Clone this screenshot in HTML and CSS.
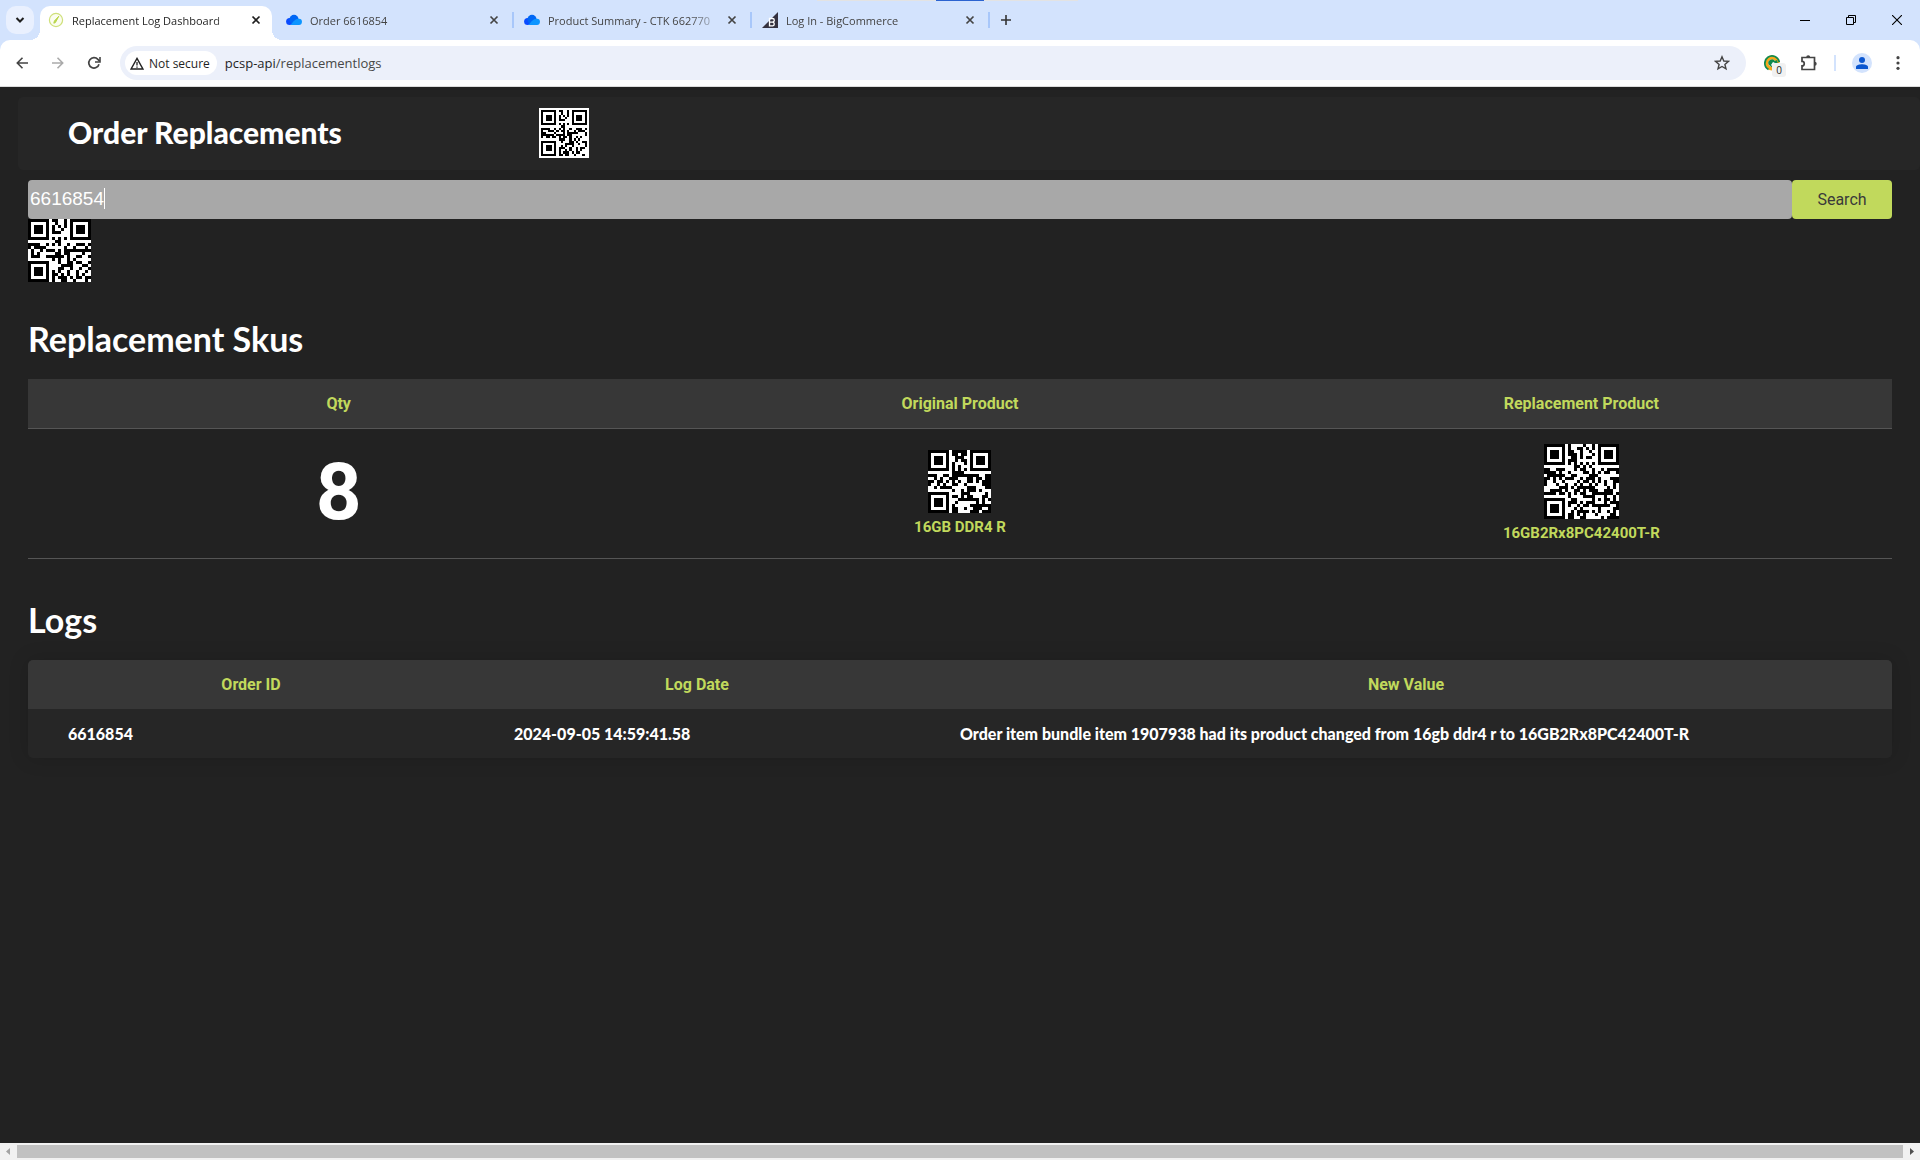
FILE: index.html
```html
<!DOCTYPE html>
<html lang="en">
<head>
<meta charset="utf-8">
<title>Replacement Log Dashboard</title>
<link rel="stylesheet" href="styles.css">
</head>
<body>
<header class="browser">
  <div class="tabstrip">
    <span class="edge"><span class="edge-mark"></span></span>
    <button class="tab-search" aria-label="Search tabs"><svg width="12" height="12" viewBox="0 0 12 12"><path d="M2.5 4l3.5 3.5L9.5 4" fill="none" stroke="#1f1f1f" stroke-width="2"/></svg></button>
    <div class="tab active">
      <svg class="favicon" width="16" height="16" viewBox="0 0 16 16"><circle cx="8" cy="8" r="6.6" fill="#fbfdf0" stroke="#cfe07a" stroke-width="1.2"/><path d="M10.8 4.2L6.4 9l-.6 2.2 1.6-.6z" fill="#b9d64a" stroke="#b9d64a"/></svg>
      <span class="tab-title">Replacement Log Dashboard</span>
      <button class="close" aria-label="Close tab"><svg width="10" height="10" viewBox="0 0 10 10"><path d="M1.5 1.5l7 7M8.5 1.5l-7 7" stroke="currentColor" stroke-width="1.7"/></svg></button>
    </div>
    <div class="tab">
      <svg class="favicon" width="16" height="16" viewBox="0 0 16 16"><circle cx="3.6" cy="9.4" r="3.5" fill="#0a4bff"/><circle cx="8" cy="7.4" r="4.6" fill="#0067f5"/><path d="M4.500 12.900h8.200a3 3 0 0 0 .4-6.100C9.500 6.200 7.500 9.500 4.500 12.900z" fill="#0c95ff"/></svg>
      <span class="tab-title">Order 6616854</span>
      <button class="close" aria-label="Close tab"><svg width="10" height="10" viewBox="0 0 10 10"><path d="M1.5 1.5l7 7M8.5 1.5l-7 7" stroke="currentColor" stroke-width="1.7"/></svg></button>
    </div>
    <div class="tab">
      <svg class="favicon" width="16" height="16" viewBox="0 0 16 16"><circle cx="3.6" cy="9.4" r="3.5" fill="#0a4bff"/><circle cx="8" cy="7.4" r="4.6" fill="#0067f5"/><path d="M4.500 12.900h8.200a3 3 0 0 0 .4-6.100C9.500 6.200 7.500 9.500 4.500 12.900z" fill="#0c95ff"/></svg>
      <span class="tab-title">Product Summary - CTK 662770</span>
      <button class="close" aria-label="Close tab"><svg width="10" height="10" viewBox="0 0 10 10"><path d="M1.5 1.5l7 7M8.5 1.5l-7 7" stroke="currentColor" stroke-width="1.7"/></svg></button>
    </div>
    <div class="tab">
      <svg class="favicon" width="16" height="16" viewBox="0 0 16 16"><path d="M16 0v16H0z" fill="#34313f"/><path d="M7.500 6.500h3a1.700 1.700 0 0 1 0 3.600h-3zM7.500 10.100h3.300a1.900 1.900 0 0 1 0 3.700H7.500z" fill="none" stroke="#fff" stroke-width="1.3"/></svg>
      <span class="tab-title">Log In - BigCommerce</span>
      <button class="close" aria-label="Close tab"><svg width="10" height="10" viewBox="0 0 10 10"><path d="M1.5 1.5l7 7M8.5 1.5l-7 7" stroke="currentColor" stroke-width="1.7"/></svg></button>
    </div>
    <button class="new-tab" aria-label="New tab"><svg width="10" height="10" viewBox="0 0 10 10"><path d="M5 0v10M0 5h10" stroke="#333" stroke-width="1.6"/></svg></button>
    <div class="window-controls">
      <button aria-label="Minimize"><svg width="10" height="10" viewBox="0 0 10 10"><path d="M0 5.500h10" stroke="#000"/></svg></button>
      <button aria-label="Restore"><svg width="10" height="10" viewBox="0 0 10 10"><path d="M.5 2.500h7v7h-7zM2.500 2.500v-2h7v7h-2" fill="none" stroke="#000"/></svg></button>
      <button aria-label="Close"><svg width="10" height="10" viewBox="0 0 10 10"><path d="M0 0l10 10M10 0L0 10" stroke="#000" stroke-width="1.1"/></svg></button>
    </div>
  </div>
  <div class="toolbar">
    <div class="nav">
      <button aria-label="Back"><svg width="12" height="12" viewBox="0 0 12 12"><path d="M12 6H1.500M6.500 .8L1.300 6l5.200 5.200" fill="none" stroke="#444" stroke-width="1.6"/></svg></button>
      <button aria-label="Forward"><svg width="12" height="12" viewBox="0 0 12 12"><path d="M0 6h10.500M5.500 .8L10.700 6l-5.200 5.200" fill="none" stroke="#aaa" stroke-width="1.600"/></svg></button>
      <button aria-label="Reload"><svg width="14" height="14" viewBox="0 0 14 14"><path d="M12 8.200A5.200 5.200 0 1 1 10.900 3.400L12.600 5.200" fill="none" stroke="#444" stroke-width="1.700"/><path d="M13 1v5H8" fill="none" stroke="#444" stroke-width="1.600"/></svg></button>
    </div>
    <div class="omnibox">
      <span class="secure"><svg width="14" height="13" viewBox="0 0 14 13"><path d="M7 1.400L12.900 12H1.100z" fill="none" stroke="#222" stroke-width="1.400"/><path d="M7 5v3.500M7 9.500v1.200" stroke="#222" stroke-width="1.300"/></svg>Not secure</span>
      <span class="url">pcsp-api<span>/replacementlogs</span></span>
      <button class="star" aria-label="Bookmark"><svg width="16" height="16" viewBox="0 0 16 16"><path d="M8 1.800l1.800 4.200 4.600.4-3.500 3 1.100 4.500L8 11.500l-4 2.400 1.100-4.500-3.500-3 4.600-.4z" fill="none" stroke="#444" stroke-width="1.400"/></svg></button>
    </div>
    <div class="extensions">
      <span class="ext"><svg width="16" height="16" viewBox="0 0 16 16"><circle cx="8" cy="8" r="5.500" fill="#fff" stroke="#f5a81c" stroke-width="4"/><path d="M4.500 14.600A7.300 7.300 0 1 1 15.300 7" fill="none" stroke="#118a4f" stroke-width="1.700"/><path d="M5 10a3.500 3.500 0 0 1 6-4l2-1 1 4-5 4z" fill="#118a4f"/><path d="M7 10l2-3 2 1-2 4z" fill="#fff"/></svg><span class="ext-count">0</span></span>
      <button class="puzzle" aria-label="Extensions"><svg width="16" height="16" viewBox="0 0 16 16"><path d="M1 2.500h12.500v12H1v-3.600a2 2 0 0 0 0-4.500z" fill="none" stroke="#444" stroke-width="1.700"/><path d="M5.200 2.300a2 2 0 0 1 4 0zM13.700 6.700a2 2 0 0 1 0 4z" fill="#444"/></svg></button>
      <span class="divider"></span>
      <button class="profile" aria-label="Profile"><svg width="12" height="12" viewBox="0 0 12 12"><circle cx="6" cy="3" r="3" fill="#0b57d0"/><path d="M0 12V9.800C0 8 3.500 7.200 6 7.200s6 .8 6 2.600V12z" fill="#0b57d0"/></svg></button>
      <button class="menu" aria-label="Menu"><svg width="4" height="14" viewBox="0 0 4 14"><circle cx="2" cy="1.700" r="1.600"/><circle cx="2" cy="7" r="1.600"/><circle cx="2" cy="12.300" r="1.600"/></svg></button>
    </div>
  </div>
</header>

<main class="page">
  <div class="banner">
    <h1>Order Replacements</h1>
    <svg class="qr qr-banner" data-text="CLEAR" role="img" aria-label="QR code"></svg>
  </div>
  <form class="search">
    <label class="field"><input type="text" value="6616854" aria-label="Order number"></label>
    <button type="button">Search</button>
  </form>
  <svg class="qr" data-text="6616854" role="img" aria-label="6616854"></svg>

  <h2>Replacement Skus</h2>
  <table class="skus">
    <thead><tr><th>Qty</th><th>Original Product</th><th>Replacement Product</th></tr></thead>
    <tbody><tr>
      <td class="qty">8</td>
      <td><svg class="qr" data-text="16GB DDR4 R" role="img" aria-label="16GB DDR4 R"></svg>16GB DDR4 R</td>
      <td><svg class="qr" data-text="16GB2Rx8PC42400T-R" role="img" aria-label="16GB2Rx8PC42400T-R"></svg>16GB2Rx8PC42400T-R</td>
    </tr></tbody>
  </table>

  <h2>Logs</h2>
  <table class="logs">
    <colgroup><col class="col-id"><col class="col-date"><col></colgroup>
    <thead><tr><th>Order ID</th><th>Log Date</th><th>New Value</th></tr></thead>
    <tbody><tr><td>6616854</td><td>2024-09-05 14:59:41.58</td><td>Order item bundle item 1907938 had its product changed from 16gb ddr4 r to 16GB2Rx8PC42400T-R</td></tr></tbody>
  </table>
</main>

<footer class="scrollbar">
  <svg width="17" height="17" viewBox="0 0 17 17"><path d="M10 5v7L6 8.500z" fill="#a3a3a3"/></svg>
  <span class="thumb"></span>
  <svg width="17" height="17" viewBox="0 0 17 17"><path d="M7 5v7l4-3.500z" fill="#505050"/></svg>
</footer>
<script src="qr.js"></script>
</body>
</html>
```
FILE: styles.css
```css
* { box-sizing: border-box; }
body {
  margin: 0;
  min-height: 100vh;
  display: flex;
  flex-direction: column;
  background: #222;
  color: #fff;
  font-family: Roboto, "Liberation Sans", sans-serif;
}
button { border: 0; padding: 0; background: none; font: inherit; color: inherit; display: flex; align-items: center; justify-content: center; }
svg { display: block; flex: none; }

/* browser chrome */
.browser { font-family: "Open Sans", "Noto Sans", sans-serif; background: #d3e3fd; color: #1f1f1f; border-bottom: 1px solid #dcdcdc; }
.tabstrip { position: relative; display: flex; align-items: center; height: 40px; padding-left: 6px; }
.edge { position: absolute; top: 0; left: 817px; width: 261px; height: 1px; background: #e3e3e3; display: flex; padding-left: 119px; }
.edge-mark { width: 48px; background: #2b63d0; }
.tab-search { width: 28px; height: 28px; border-radius: 10px; background: #e9f0fe; margin-right: 6px; }
.tab { position: relative; display: flex; align-items: center; width: 238px; height: 34px; align-self: flex-end; padding: 0 11px 6px 8px; font-size: 11px; color: #444; }
.tab.active { width: 232px; margin-right: 6px; background: #fff; color: #1f1f1f; border-radius: 10px 10px 0 0; }
.tab.active::before, .tab.active::after { content: ""; position: absolute; bottom: 0; width: 10px; height: 10px; }
.tab.active::before { left: -10px; background: radial-gradient(circle at 0 0, transparent 10px, #fff 10px); }
.tab.active::after { right: -10px; background: radial-gradient(circle at 100% 0, transparent 10px, #fff 10px); }
.tab:not(.active)::after { content: ""; position: absolute; right: 2px; top: 6px; width: 2px; height: 16px; background: #a8c7fa; }
.tab-title { flex: 1; margin-left: 8px; white-space: nowrap; overflow: hidden; -webkit-mask-image: linear-gradient(90deg, #000 calc(100% - 34px), transparent); }
.close { width: 10px; margin-left: 4px; }
.tab:not(.active) .close { margin-right: 6px; }
.new-tab { width: 28px; }
.window-controls { margin-left: auto; display: flex; }
.window-controls button { width: 46px; height: 28px; }
.toolbar { display: flex; align-items: center; height: 46px; background: #fff; border-radius: 10px 10px 0 0; padding: 0 12px 0 4px; }
.nav { display: flex; width: 116px; }
.nav button { width: 36px; height: 34px; }
.omnibox { flex: 1; display: flex; align-items: center; height: 34px; border-radius: 17px; background: #ecf0fa; padding: 0 16px 0 5px; }
.secure { display: flex; align-items: center; gap: 5px; height: 24px; padding: 0 7px 0 5px; border-radius: 12px; background: #fff; font-size: 12px; font-weight: 500; }
.url { flex: 1; margin-left: 8px; font-size: 13px; }
.url span { color: #474747; }
.extensions { display: flex; align-items: center; height: 34px; }
.ext { position: relative; margin: 0 21px 0 18px; }
.ext-count { position: absolute; left: 8px; top: 8px; width: 14px; height: 14px; border-radius: 3px; background: #f1f1f1; font-size: 10px; line-height: 14px; text-align: center; }
.divider { width: 2px; height: 16px; margin: 0 16px 0 17px; background: #d3e3fd; }
.profile { width: 20px; height: 20px; border-radius: 50%; background: #d3e3fd; }
.menu { width: 20px; margin-left: 16px; fill: #444; }

/* dashboard */
.page { flex: 1; padding: 10px 28px 0; }
.banner { display: flex; align-items: center; height: 73px; margin: 0 -28px 10px -10px; padding: 0 0 2px 50px; background: #262626; border-radius: 5px; }
.banner h1 { margin: 0; width: 471px; padding-bottom: 2px; font: 900 30px/40px Lato, sans-serif; }
.qr { shape-rendering: crispEdges; background: #fff; }
.qr-banner { width: 50px; height: 50px; }
.search { display: flex; height: 39px; }
.field { position: relative; flex: 1; display: flex; }
.field::after { content: ""; position: absolute; left: 76px; top: 8px; width: 1px; height: 21px; background: #fff; }
.field input { flex: 1; min-width: 0; border: 0; border-radius: 4px; outline: 0; padding: 0 2px 2px; background: #a8a8a8; color: #fff; font: 19px "Liberation Sans", Arial, sans-serif; }
.search button { width: 100px; border-radius: 4px; background: #c1d95c; color: #3a3a3a; font-size: 16px; }
h2 { margin: 36px 0 20px; font: 700 34px/41px Lato, sans-serif; }
table { width: 100%; border-collapse: collapse; table-layout: fixed; }
th { background: #373737; color: #c1d95c; font-size: 16px; line-height: 21px; font-weight: 700; padding: 14px 0; }
.skus { margin-bottom: 40px; }
.skus tr { border-bottom: 1px solid #555; }
.skus td { height: 130px; padding: 4px 0 0; text-align: center; color: #c1d95c; font-size: 15px; line-height: 28px; font-weight: 700; }
.skus td .qr { margin: 0 auto; }
.skus .qty { padding: 0 0 4px; font-size: 80px; color: #fff; }
.logs { border-radius: 5px; overflow: hidden; box-shadow: 0 0 20px rgba(0, 0, 0, .15); }
.logs td { padding: 14px 40px; background: #262626; font: 900 16px/21px Lato, sans-serif; white-space: nowrap; }
.logs .col-id, .logs .col-date { width: 446px; }

.scrollbar { display: flex; align-items: center; height: 17px; background: #f1f1f1; }
.thumb { flex: 1; height: 13px; background: #c1c1c1; }
```
FILE: qr.js
```js
// Small QR encoder: error correction level L, versions 1 and 2.
function gfMul(a, b) {
  let r = 0;
  for (let i = 7; i >= 0; i--) {
    r = (r << 1) ^ ((r >>> 7) * 0x11d);
    r ^= ((b >>> i) & 1) * a;
  }
  return r;
}
function ecBytes(data, n) {
  const gen = new Array(n).fill(0);
  gen[n - 1] = 1;
  let root = 1;
  for (let i = 0; i < n; i++) {
    for (let j = 0; j < n; j++) gen[j] = gfMul(gen[j], root) ^ (gen[j + 1] || 0);
    root = gfMul(root, 2);
  }
  const rem = new Array(n).fill(0);
  for (const b of data) {
    const f = b ^ rem.shift();
    rem.push(0);
    gen.forEach((g, i) => { rem[i] ^= gfMul(g, f); });
  }
  return rem;
}
const masks = [
  (x, y) => (x + y) % 2, (x, y) => y % 2, (x, y) => x % 3, (x, y) => (x + y) % 3,
  (x, y) => ((x / 3 | 0) + (y / 2 | 0)) % 2, (x, y) => x * y % 2 + x * y % 3,
  (x, y) => (x * y % 2 + x * y % 3) % 2, (x, y) => ((x + y) % 2 + x * y % 3) % 2
];
const formats = [0x77c4, 0x72f3, 0x7daa, 0x789d, 0x662f, 0x6318, 0x6c41, 0x6976];
const alphabet = '0123456789ABCDEFGHIJKLMNOPQRSTUVWXYZ $%*+-./:';
const bin = (n, len) => n.toString(2).padStart(len, '0');

function toBits(text) {
  if (/^\d+$/.test(text)) {
    return '0001' + bin(text.length, 10) + text.match(/.{1,3}/g).map(g => bin(+g, g.length * 3 + 1)).join('');
  }
  if ([...text].every(c => alphabet.includes(c))) {
    return '0010' + bin(text.length, 9) + text.match(/.{1,2}/g).map(g => g.length === 2
      ? bin(alphabet.indexOf(g[0]) * 45 + alphabet.indexOf(g[1]), 11)
      : bin(alphabet.indexOf(g), 6)).join('');
  }
  return '0100' + bin(text.length, 8) + [...text].map(c => bin(c.charCodeAt(0), 8)).join('');
}

function encode(text, mask) {
  const v = text.length > 17 ? 2 : 1, size = 17 + 4 * v;
  const cap = v === 1 ? 19 : 34, ec = v === 1 ? 7 : 10;
  let bits = toBits(text) + '0000';
  while (bits.length % 8) bits += '0';
  const data = bits.match(/.{8}/g).map(b => parseInt(b, 2));
  for (let p = 0xec; data.length < cap; p ^= 0xec ^ 0x11) data.push(p);
  const all = data.concat(ecBytes(data, ec));
  const m = Array.from({ length: size }, () => new Array(size).fill(null));
  const set = (x, y, d) => { if (m[y] && x >= 0 && x < size) m[y][x] = d ? 1 : 0; };
  for (let i = 0; i < size; i++) { set(6, i, i % 2 === 0); set(i, 6, i % 2 === 0); }
  for (const [cx, cy] of [[3, 3], [size - 4, 3], [3, size - 4]])
    for (let dx = -4; dx <= 4; dx++) for (let dy = -4; dy <= 4; dy++) {
      const d = Math.max(Math.abs(dx), Math.abs(dy));
      set(cx + dx, cy + dy, d !== 2 && d !== 4);
    }
  if (v === 2) for (let dx = -2; dx <= 2; dx++) for (let dy = -2; dy <= 2; dy++)
    set(18 + dx, 18 + dy, Math.max(Math.abs(dx), Math.abs(dy)) !== 1);
  const f = i => (formats[mask] >>> i) & 1;
  for (let i = 0; i < 6; i++) set(8, i, f(i));
  set(8, 7, f(6)); set(8, 8, f(7)); set(7, 8, f(8));
  for (let i = 9; i < 15; i++) set(14 - i, 8, f(i));
  for (let i = 0; i < 8; i++) set(size - 1 - i, 8, f(i));
  for (let i = 8; i < 15; i++) set(8, size - 15 + i, f(i));
  set(8, size - 8, 1);
  let k = 0;
  for (let right = size - 1; right >= 1; right -= 2) {
    if (right === 6) right = 5;
    for (let n = 0; n < size; n++) for (let j = 0; j < 2; j++) {
      const x = right - j, y = ((right + 1) & 2) === 0 ? size - 1 - n : n;
      if (m[y][x] !== null) continue;
      const bit = k < all.length * 8 ? (all[k >>> 3] >>> (7 - (k & 7))) & 1 : 0;
      k++;
      m[y][x] = bit ^ (masks[mask](x, y) === 0 ? 1 : 0);
    }
  }
  return m;
}

function penalty(m) {
  const size = m.length;
  const lines = m.map(r => r.join('')).concat(m.map((_, x) => m.map(r => r[x]).join('')));
  let score = 0;
  for (const line of lines) {
    for (const run of line.match(/0{5,}|1{5,}/g) || []) score += run.length - 2;
    for (let i = 0; i + 11 <= size; i++) {
      const s = line.substr(i, 11);
      if (s === '10111010000' || s === '00001011101') score += 40;
    }
  }
  for (let y = 0; y < size - 1; y++) for (let x = 0; x < size - 1; x++) {
    const sum = m[y][x] + m[y][x + 1] + m[y + 1][x] + m[y + 1][x + 1];
    if (sum === 0 || sum === 4) score += 3;
  }
  const dark = m.flat().reduce((a, b) => a + b, 0) * 100 / (size * size);
  return score + Math.floor(Math.abs(dark - 50) / 5) * 10;
}

document.querySelectorAll('svg.qr').forEach(svg => {
  const options = masks.map((_, k) => encode(svg.dataset.text, k));
  const m = options.reduce((best, o) => penalty(o) < penalty(best) ? o : best);
  const size = m.length;
  const quiet = svg.classList.contains('qr-banner') ? 1 : 0;
  let d = '';
  m.forEach((row, y) => row.forEach((on, x) => { if (on) d += `M${x} ${y}h1v1h-1z`; }));
  svg.setAttribute('viewBox', `${-quiet} ${-quiet} ${size + 2 * quiet} ${size + 2 * quiet}`);
  if (!quiet) { svg.setAttribute('width', size * 3); svg.setAttribute('height', size * 3); }
  svg.innerHTML = `<path d="${d}"/>`;
});
```
